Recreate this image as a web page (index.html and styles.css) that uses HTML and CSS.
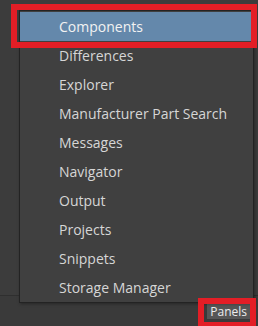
FILE: index.html
```html
<!DOCTYPE html>
<html>
<head>
<meta charset="utf-8">
<link rel="stylesheet" href="styles.css">
</head>
<body>
<div class="app">
  <div class="workspace"></div>
  <div class="statusbar">
    <span class="panels-btn">Panels</span>
  </div>
  <ul class="menu">
    <li class="item active">Components</li>
    <li class="item">Differences</li>
    <li class="item">Explorer</li>
    <li class="item">Manufacturer Part Search</li>
    <li class="item">Messages</li>
    <li class="item">Navigator</li>
    <li class="item">Output</li>
    <li class="item">Projects</li>
    <li class="item">Snippets</li>
    <li class="item">Storage Manager</li>
  </ul>
  <div class="mark mark-top"></div>
  <div class="mark mark-bottom"></div>
</div>
</body>
</html>
```
FILE: styles.css
```css
html, body {
  margin: 0;
  padding: 0;
  background: #3b3b3b;
}
.app {
  position: relative;
  width: 258px;
  height: 326px;
  overflow: hidden;
  display: flex;
  flex-direction: column;
  background: #3c3c3c;
  font-family: "Open Sans", "Noto Sans", sans-serif;
}
.workspace {
  flex: 1;
}
.statusbar {
  height: 31px;
  box-sizing: border-box;
  border-top: 1px solid #2f2f2f;
  background: #3a3a3a;
  display: flex;
  justify-content: flex-end;
  align-items: flex-start;
  padding: 8px 7px 0 0;
}
.panels-btn {
  background: #565656;
  color: #ececec;
  font-size: 12px;
  line-height: 15px;
  padding: 0 4px 0 3px;
}
.menu {
  position: absolute;
  left: 19px;
  top: 10px;
  width: 233px;
  margin: 0;
  padding: 1px 0 0;
  list-style: none;
  background: #404040;
  border: 1px solid #232323;
  box-shadow: 1px 1px 3px rgba(0,0,0,0.35);
}
.item {
  height: 29px;
  line-height: 29px;
  padding-left: 39px;
  font-size: 14px;
  color: #d6d6d6;
  white-space: nowrap;
}
.item.active {
  background: #6488ab;
  color: #f2f2f2;
}
.mark {
  position: absolute;
  border: 6px solid #e31e26;
  box-sizing: border-box;
}
.mark-top {
  left: 11px;
  top: 4px;
  width: 246px;
  height: 44px;
}
.mark-bottom {
  left: 198px;
  top: 298px;
  width: 58px;
  height: 30px;
}
```
